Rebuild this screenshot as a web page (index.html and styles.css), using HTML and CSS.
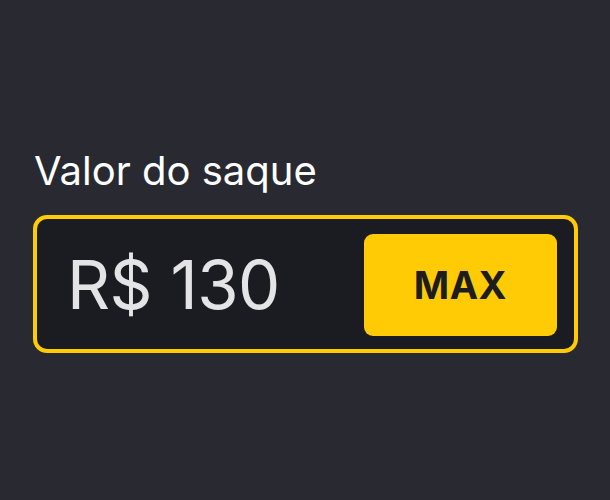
FILE: index.html
```html
<!DOCTYPE html>
<html lang="pt-BR">
<head>
  <meta charset="UTF-8">
  <title>Saque</title>
  <link rel="stylesheet" href="styles.css">
</head>
<body>

  <div class="saque">
    <label class="saque-label" for="valor">Valor do saque</label>
    <div class="saque-campo">
      <div class="saque-valor" id="valor">R$ 130</div>
      <button class="max-btn">MAX</button>
    </div>
  </div>

</body>
</html>
```

FILE: styles.css
```css
body {
  margin: 0;
  min-height: 100vh;
  font-family: 'Inter', 'Noto Sans', sans-serif;
  background: #292a31;
  color: #fff;
  display: flex;
  align-items: center;
}

.saque {
  width: 545px;
  margin-left: 33px;
  display: flex;
  flex-direction: column;
  gap: 20px;
}

.saque-label {
  font-size: 40px;
  line-height: 48px;
  padding-left: 1px;
  color: #fff;
}

.saque-campo {
  display: flex;
  align-items: center;
  justify-content: space-between;
  height: 130px;
  padding: 0 17px 0 30px;
  border: 4px solid #ffcb05;
  border-radius: 14px;
  background: #1b1c21;
}

.saque-valor {
  font-size: 67px;
  color: #e4e4e6;
  letter-spacing: -0.5px;
}

.max-btn {
  width: 193px;
  height: 102px;
  margin-top: 2px;
  border: none;
  border-radius: 9px;
  background: #ffcb05;
  color: #1d1d1f;
  font-family: inherit;
  font-size: 38px;
  font-weight: 700;
  letter-spacing: 0.5px;
  cursor: pointer;
}
```
